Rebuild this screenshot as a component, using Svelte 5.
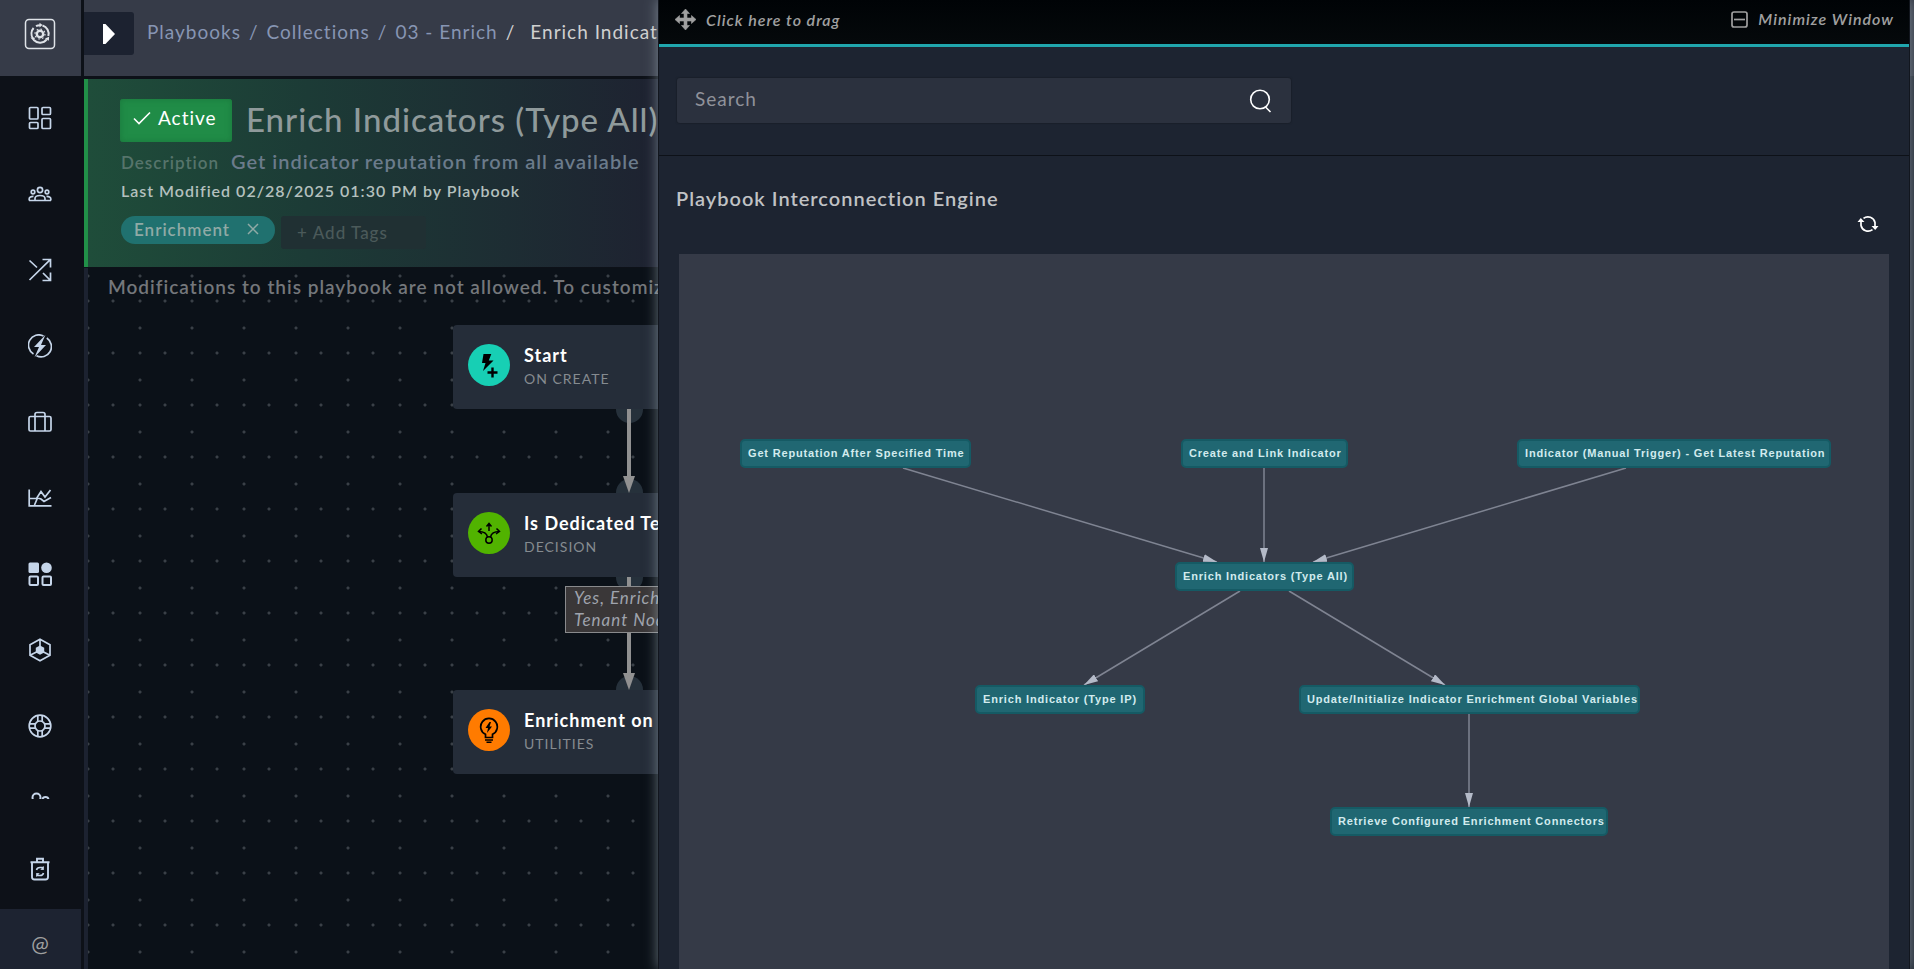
<script>
  const crumbs = ['Playbooks', 'Collections', '03 - Enrich'];

  const steps = [
    { title: 'Start', kind: 'ON CREATE', icon: 'start', color: '#17cfb4' },
    { title: 'Is Dedicated Tenant', kind: 'DECISION', icon: 'decision', color: '#51b300' },
    { title: 'Enrichment on', kind: 'UTILITIES', icon: 'bulb', color: '#ff7b00' }
  ];

  const nodes = [
    { label: 'Get Reputation After Specified Time', x: 62, y: 186, w: 229 },
    { label: 'Create and Link Indicator', x: 503, y: 186, w: 165 },
    { label: 'Indicator (Manual Trigger) - Get Latest Reputation', x: 839, y: 186, w: 312 },
    { label: 'Enrich Indicators (Type All)', x: 497, y: 309, w: 177 },
    { label: 'Enrich Indicator (Type IP)', x: 297, y: 432, w: 168 },
    { label: 'Update/Initialize Indicator Enrichment Global Variables', x: 621, y: 432, w: 339 },
    { label: 'Retrieve Configured Enrichment Connectors', x: 652, y: 554, w: 276 }
  ];

  const edges = [
    [224, 214, 538, 308],
    [585, 214, 585, 308],
    [947, 214, 634, 308],
    [561, 337, 405, 431],
    [610, 337, 766, 431],
    [790, 460, 790, 553]
  ];
</script>

<div class="app">
  <aside class="sidebar">
    <a class="brand" href="#home" aria-label="Home">
      <svg width="32" height="32" viewBox="0 0 32 32" fill="none" stroke="#dfe3e8">
        <rect x="1.5" y="1.5" width="29" height="29" rx="3.5" stroke-width="1.5" />
        <circle cx="16" cy="16" r="3.2" stroke-width="2.4" />
        <circle cx="16" cy="16" r="5" stroke-width="1.2" stroke-dasharray="1.6 2.3" />
        <path d="M9 20.5A8.6 8.6 0 0 1 9.6 10M12 8.2a8.6 8.6 0 0 1 4-1M18.5 7.5a8.6 8.6 0 0 1 5.8 10.5M22.8 21.4A8.6 8.6 0 0 1 9.8 22" stroke-width="2" />
        <path d="M15.500 4.800v4.600l3-2.300zM6.500 19.500l4.500.300-1.300 3.400zM21 20.500l3.900 2.200.2-4z" fill="#dfe3e8" stroke="none" />
      </svg>
    </a>
    <nav class="menu" aria-label="Main">
      <a href="#dashboard" aria-label="Dashboard">
        <svg class="ico" viewBox="0 0 24 24"><rect x="1.500" y="1.500" width="8.500" height="11.500" rx="1" /><rect x="14" y="1.500" width="8.500" height="7" rx="1" /><rect x="1.500" y="16.500" width="8.500" height="6" rx="1" /><rect x="14" y="12.500" width="8.500" height="10" rx="1" /></svg>
      </a>
      <a href="#teams" aria-label="Teams">
        <svg class="ico" viewBox="0 0 24 24"><circle cx="12" cy="8" r="2.600" /><circle cx="5" cy="10" r="1.800" /><circle cx="19" cy="10" r="1.800" /><path d="M7 18.500v-2c0-2 2.500-3 5-3s5 1 5 3v2zM1.200 18.500v-1.700c0-1.600 1.900-2.500 4.300-2.400M22.800 18.500v-1.700c0-1.600-1.900-2.500-4.300-2.400M1 18.500h22" /></svg>
      </a>
      <a href="#automation" aria-label="Automation">
        <svg class="ico" viewBox="0 0 24 24"><path d="M1.500 22 22 1.800M14.500 1.500h8v8M1.500 2.500l7.500 7M15 15l7 7M22.500 14.500v8h-8" /></svg>
      </a>
      <a href="#threats" aria-label="Threats">
        <svg class="ico" viewBox="0 0 24 24"><path d="M15.500 2A10.300 10.300 0 0 0 5.500 20M18.800 4A10.300 10.300 0 0 1 8.500 21.800" stroke-width="1.700" /><path d="M17.500.8 6 13h5L6.500 23.200 18 11h-5z" fill="#c6d6ea" stroke="none" /></svg>
      </a>
      <a href="#resources" aria-label="Resources">
        <svg class="ico" viewBox="0 0 24 24"><rect x="1" y="6.500" width="22" height="14.500" rx="1.500" /><path d="M7 21V4.500q0-2 2-2h6q2 0 2 2V21" /></svg>
      </a>
      <a href="#reports" aria-label="Reports">
        <svg class="ico" viewBox="0 0 24 24"><path d="M1.200 3.500v16.300H23.500M1.500 12.500h7l4.500-7 4 5.500 5.500-7M6.500 19l3-7 3.500 1 3 2.500 7-4" /></svg>
      </a>
      <a href="#apps" aria-label="Applications">
        <svg class="ico" viewBox="0 0 24 24"><rect x=".5" y=".5" width="10.500" height="10.500" rx="1.500" fill="#c6d6ea" stroke="none" /><circle cx="18.500" cy="5.800" r="5.300" fill="#c6d6ea" stroke="none" /><rect x="1.500" y="14.500" width="8.500" height="8.500" rx="1" stroke-width="2" /><rect x="14.500" y="14.500" width="8.500" height="8.500" rx="1" stroke-width="2" /></svg>
      </a>
      <a href="#content" aria-label="Content Hub">
        <svg class="ico" viewBox="0 0 24 24"><path d="M12 1.200 22 6.800v10.400L12 22.800 2 17.200V6.800zM12 1.200V9M2.500 17l7-3.500M21.500 17l-7-3.500" /><path d="m12 7.500 4.200 2.300v4.600L12 16.800l-4.200-2.400V9.800z" fill="#c6d6ea" stroke="none" /></svg>
      </a>
      <a href="#help" aria-label="Help">
        <svg class="ico" viewBox="0 0 24 24"><circle cx="12" cy="12" r="10.800" /><circle cx="12" cy="12" r="5" /><path d="M9.800 1.500v6M14.200 1.500v6M9.800 16.500v6M14.200 16.500v6M1.500 9.800h6M1.500 14.200h6M16.500 9.800h6M16.500 14.200h6" /></svg>
      </a>
      <a href="#access" aria-label="Access">
        <svg class="ico" viewBox="0 0 24 24"><circle cx="8.500" cy="7.500" r="4" stroke-width="2" /><circle cx="17.500" cy="10" r="3" stroke-width="2" /><path d="M2 21c0-5 13-5 13 0M17 15c3 0 6 2 6 5" /></svg>
      </a>
    </nav>
    <a class="bin" href="#recycle" aria-label="Recycle Bin">
      <svg class="ico" viewBox="0 0 24 24"><path d="M2.500 5.200h19M9 5V1.800h6V5M4 5.500V20q0 2.500 2.500 2.500h11Q20 22.500 20 20V5.500" stroke-width="1.900" /><path d="M8.500 13q.5-2.500 3.500-2.500h3.500M15.500 16q-.5 2.500-3.500 2.500H8.500" stroke-width="1.600" /><path d="M15.800 9v4l-3.500-.2zM8.200 20v-4l3.500.2z" fill="#c6d6ea" stroke="none" /></svg>
    </a>
    <a class="user" href="#profile" aria-label="Profile">@</a>
  </aside>

  <main class="main">
    <header class="topbar">
      <button class="expand" aria-label="Expand">
        <svg width="14" height="22" viewBox="0 0 14 22"><path d="M1 1h2.500L13 11 3.500 21H1z" fill="#fff" /></svg>
      </button>
      <nav class="crumbs" aria-label="Breadcrumb">
        {#each crumbs as crumb}
          <a href="#crumb">{crumb}</a><span>/</span>
        {/each}
        <b>Enrich Indicators</b>
      </nav>
    </header>

    <section class="banner">
      <div class="line">
        <button class="active">
          <svg width="18" height="14" viewBox="0 0 18 14" fill="none" stroke="#fff" stroke-width="1.600"><path d="m1 7.500 5 5L17 1.500" /></svg>
          Active
        </button>
        <h1>Enrich Indicators (Type All)</h1>
      </div>
      <p class="desc"><span>Description</span>Get indicator reputation from all available</p>
      <p class="modified">Last Modified 02/28/2025 01:30 PM by Playbook</p>
      <div class="tags">
        <span class="tag">Enrichment
          <button aria-label="Remove tag"><svg width="12" height="12" viewBox="0 0 12 12" stroke="#90aaa6" stroke-width="1.500"><path d="m1 1 10 10M11 1 1 11" /></svg></button>
        </span>
        <input class="add" placeholder="+ Add Tags" aria-label="Add Tags" />
      </div>
    </section>

    <section class="canvas">
      <p class="notice">Modifications to this playbook are not allowed. To customize</p>
      <div class="flow">
        {#each steps as step, i}
          <article class="step">
            <span class="badge" style:background={step.color}>
              {#if step.icon === 'start'}
                <svg width="24" height="28" viewBox="0 0 24 28"><path d="M6.500 3h7.800l-2.500 6.500h4.700L6 20l2.500-8H5z" /><path d="M15.500 16.500v10M10.500 21.500h10" stroke="#000" stroke-width="2.400" /></svg>
              {:else if step.icon === 'decision'}
                <svg width="24" height="24" viewBox="0 0 24 24" fill="none" stroke="#000" stroke-width="1.500"><circle cx="12" cy="19" r="3.200" /><path d="M12 10V3M9.500 5.500 12 2.500l2.500 3M10.500 16q-1-5.500-9-5.500M4.500 7.500l-3 3 3.500 2.500M13.500 16q1-5.500 9-5.500M19.500 7.500l3 3-3.500 2.500" /></svg>
              {:else}
                <svg width="22" height="26" viewBox="0 0 22 26" fill="none" stroke="#000" stroke-width="1.700"><path d="M7.500 20.500v-3.200A8.300 8.300 0 1 1 14.500 17.300v3.200zM7 23h8M8.500 25.300h5" /><path d="M11.500 5 7.500 11H10l-1 5 5-6.500h-2.500L13 5z" fill="#000" stroke="none" /></svg>
              {/if}
            </span>
            <div>
              <h2>{step.title}</h2>
              <p>{step.kind}</p>
            </div>
          </article>
          {#if i < steps.length - 1}
            <div class="link" class:tall={i === 1}>
              <i class="shaft"></i><i class="head"></i>
              {#if i === 1}<em>Yes, Enrich<br />Tenant Node</em>{/if}
            </div>
          {/if}
        {/each}
      </div>
    </section>
  </main>

  <section class="window">
    <header class="bar">
      <span class="drag">
        <svg width="21" height="21" viewBox="0 0 21 21" fill="#a0a0a0"><path d="M10.500 0 14.500 4.500H12V9h4.500V6.500L21 10.500l-4.500 4V12H12v4.500h2.500L10.500 21l-4-4.500H9V12H4.500v2.500L0 10.500l4.500-4V9H9V4.500H6.500z" stroke="#a0a0a0" stroke-width=".6" /></svg>
        Click here to drag
      </span>
      <button class="minimize">
        <svg width="17" height="17" viewBox="0 0 17 17" fill="none" stroke="#a0a0a0" stroke-width="1.700"><rect x="1" y="1" width="15" height="15" rx="2" /><path d="M3 8.500h11" /></svg>
        Minimize Window
      </button>
    </header>
    <div class="finder">
      <label class="search">
        <input type="text" placeholder="Search" aria-label="Search" />
        <svg width="24" height="26" viewBox="0 0 24 26" fill="none" stroke="#fff" stroke-width="1.600"><circle cx="11" cy="11.500" r="9.300" /><path d="m16.500 19 5 5" /></svg>
      </label>
    </div>
    <div class="body">
      <h3>Playbook Interconnection Engine</h3>
      <div class="tools">
        <button aria-label="Refresh">
          <svg width="22" height="18" viewBox="0 0 22 18" fill="none" stroke="#fff" stroke-width="1.700"><path d="M6.500 3.400A7.200 7.200 0 0 1 18 7.500v5M15.500 14.600A7.200 7.200 0 0 1 4 10.500v-5" /><path d="M14.500 11h7L18.200 15zM.5 7h7L3.800 3z" fill="#fff" stroke="none" /></svg>
        </button>
      </div>
      <svg class="graph" role="img" aria-label="Playbook graph">
        <defs>
          <marker id="tip" viewBox="0 0 14 8" refX="14" refY="4" markerWidth="14" markerHeight="8" markerUnits="userSpaceOnUse" orient="auto"><path d="M0 0 14 4 0 8z" fill="#b4bac8" /></marker>
        </defs>
        {#each edges as [x1, y1, x2, y2]}
          <line {x1} {y1} {x2} {y2} marker-end="url(#tip)" />
        {/each}
        {#each nodes as node}
          <rect x={node.x} y={node.y} width={node.w} height="27" rx="4" />
          <text x={node.x + 7} y={node.y + 17}>{node.label}</text>
        {/each}
      </svg>
    </div>
  </section>
</div>

<style>
  :global(body) { margin: 0; background: #0d1118; }
  * { box-sizing: border-box; }
  .app {
    display: flex;
    height: 100vh;
    padding-right: 4px;
    overflow: hidden;
    background: linear-gradient(#363b48 0 76px, #262d39 76px);
    font-family: Lato, sans-serif;
    font-size: 19px;
    letter-spacing: 1px;
    color: #a0a0a0;
  }
  h1, h2, h3, p { margin: 0; font-weight: 400; white-space: nowrap; }
  a { color: inherit; text-decoration: none; }
  button { padding: 0; border: 0; background: none; font: inherit; letter-spacing: inherit; color: inherit; }
  svg { display: block; flex: none; }

  .sidebar { display: flex; flex-direction: column; flex: none; width: 84px; padding-right: 3px; background: #0d1118; }
  .sidebar a { display: flex; align-items: center; justify-content: center; flex: none; padding-right: 1px; }
  .sidebar .brand { height: 76px; padding-bottom: 8px; margin-bottom: 4px; background: #363b48; }
  .menu { flex: 1; min-height: 0; overflow: hidden; margin-bottom: 30px; }
  .menu a { height: 76px; }
  .ico { width: 24px; height: 24px; fill: none; stroke: #c6d6ea; stroke-width: 1.7; }
  .sidebar .bin { height: 80px; }
  .sidebar .user { height: 60px; padding-top: 8px; background: #1d2331; font-size: 21px; letter-spacing: 0; }

  .main { display: flex; flex-direction: column; flex: 0 0 574px; min-width: 0; overflow: hidden; background: #0d1118; }
  .topbar { display: flex; align-items: flex-start; height: 76px; flex: none; padding-top: 12px; gap: 13px; background: #363b48; }
  .expand { display: flex; align-items: center; justify-content: center; flex: none; width: 50px; height: 43px; background: #1c2230; border-radius: 0 3px 3px 0; }
  .crumbs { display: flex; flex: 1; min-width: 0; gap: 8px; line-height: 22px; padding-top: 9px; white-space: nowrap; color: #8795b3; }
  .crumbs a, .crumbs span { flex: none; }
  .crumbs b { flex: 1; min-width: 0; overflow: hidden; font-weight: 400; margin-left: 7px; color: #d0d0d0; }
  .crumbs span:last-of-type { color: #d0d0d0; }

  .banner {
    flex: none;
    height: 188px;
    margin-top: 3px;
    padding: 20px 0 0 32px;
    border-left: 4px solid #219048;
    background: linear-gradient(90deg, #1f4d3a, #1c3b36 220px, #1e2331 560px);
  }
  .line { display: flex; align-items: center; gap: 14px; height: 43px; }
  .active { display: flex; align-items: center; gap: 7px; flex: none; width: 112px; height: 43px; padding: 0 0 6px 13px; border-radius: 3px; background: #208c47; box-shadow: inset 0 0 6px #1a783c; color: #fff; }
  h1 { min-width: 0; overflow: hidden; font-size: 33px; font-weight: 500; line-height: 40px; padding-bottom: 4px; color: #8f9a9b; }
  .desc { display: flex; align-items: baseline; gap: 12px; margin-top: 6px; font-size: 20px; font-weight: 600; line-height: 26px; color: #6b7b8b; }
  .desc span { font-size: 17px; line-height: 20px; color: #56746b; padding-left: 1px; }
  .modified { margin: 7px 0 0 1px; font-size: 16px; line-height: 20px; font-weight: 600; color: #b4c0be; }
  .tags { display: flex; gap: 6px; margin: 15px 0 0 1px; }
  .tag { display: flex; align-items: center; gap: 17px; height: 28px; padding: 0 16px 2px 13px; border-radius: 14px; background: #20716f; font-size: 17px; color: #90aaa6; font-weight: 600; }
  .add { width: 145px; height: 33px; padding: 0 16px; border: 0; border-radius: 3px; background: #203033; font: 500 17px Lato, sans-serif; letter-spacing: 1px; }
  .add::placeholder { color: #4b5a5a; opacity: 1; }

  .canvas {
    flex: 1;
    min-height: 0;
    margin-top: 1px;
    border-left: 4px solid #1c2230;
    background-color: #0b1118;
    background-image: radial-gradient(circle, #3a4047 1px, transparent 2px), radial-gradient(circle, #3a4047 1px, transparent 2px), radial-gradient(circle, #3a4047 1px, transparent 2px);
    background-size: 52px 52px;
    background-position: -26px -18px, -26px 7px, -1px 7px;
  }
  .notice { margin-left: 20px; padding-top: 7px; overflow: hidden; font-size: 19px; font-weight: 600; line-height: 24px; color: #74777b; }
  .flow { display: flex; flex-direction: column; width: 352px; margin: 26px 0 0 365px; }
  .step { display: flex; align-items: flex-start; gap: 14px; z-index: 1; height: 84px; padding: 19px 15px 0 15px; border-radius: 4px; background: #252d39; }
  .badge { display: flex; align-items: center; justify-content: center; flex: none; width: 42px; height: 42px; border-radius: 50%; }
  .step div { margin-top: -1px; }
  h2 { font-size: 18px; line-height: 24px; font-weight: 700; color: #fff; }
  .step p { font-size: 14px; line-height: 24px; color: #858b90; }
  .link { position: relative; display: flex; flex-direction: column; align-items: center; height: 84px; }
  .link.tall { height: 113px; }
  .link::before, .link::after { content: ''; position: absolute; left: 163px; width: 27px; height: 14px; background: #26313b; }
  .link::before { top: 0; border-radius: 0 0 14px 14px; }
  .link::after { bottom: 0; border-radius: 14px 14px 0 0; }
  .shaft { z-index: 1; flex: 1; width: 4px; background: #919191; }
  .head { z-index: 1; border: 6px solid transparent; border-top: 17px solid #919191; border-bottom: 0; }
  em { position: absolute; z-index: 1; top: 9px; left: 112px; width: 130px; height: 47px; padding: 0 8px; border: 1px solid #898a8c; background: #3a3738; font-size: 17px; line-height: 22px; color: #9fa3ad; white-space: nowrap; }

  .window {
    z-index: 5;
    display: flex;
    flex-direction: column;
    flex: 1;
    min-width: 0;
    border: 1px solid #12161e;
    border-width: 0 1px;
    background: #1d2431;
    box-shadow: 0 0 12px rgba(190, 205, 215, 0.5);
  }
  .bar { display: flex; justify-content: space-between; align-items: flex-start; flex: none; height: 47px; padding: 9px 15px 0 16px; border-bottom: 3px solid #20a6ad; background: linear-gradient(#000306, #05090b); font-size: 16px; line-height: 20px; font-weight: 600; font-style: italic; }
  .drag { display: flex; align-items: center; gap: 10px; }
  .minimize { display: flex; align-items: center; gap: 10px; }
  .finder { flex: none; padding: 31px 18px 32px; border-bottom: 1px solid #0d1118; }
  .search { display: flex; align-items: center; width: 614px; height: 45px; padding: 0 18px; border-radius: 3px; background: #2b313e; box-shadow: 0 0 1px 1px #1a202b; }
  .search input { flex: 1; min-width: 0; padding: 0 0 4px; border: 0; outline: 0; background: none; font: inherit; letter-spacing: inherit; color: #ddd; }
  .search input::placeholder { color: #90929a; opacity: 1; }
  .body { display: flex; flex-direction: column; flex: 1; min-height: 0; padding: 29px 20px 0; }
  h3 { margin-left: -3px; font-size: 20px; font-weight: 600; line-height: 26px; color: #c0c2c5; }
  .tools { display: flex; justify-content: flex-end; padding: 4px 10px 21px; }
  .graph { flex: 1; width: 100%; background: #353a47; }
  .graph line { stroke: #7f8492; stroke-width: 1.5; }
  .graph rect { fill: #206772; stroke: #155a64; stroke-width: 2; }
  .graph text { fill: #d2ebee; font: 700 11px "Liberation Sans", Arial, sans-serif; letter-spacing: 0.075em; }
</style>
